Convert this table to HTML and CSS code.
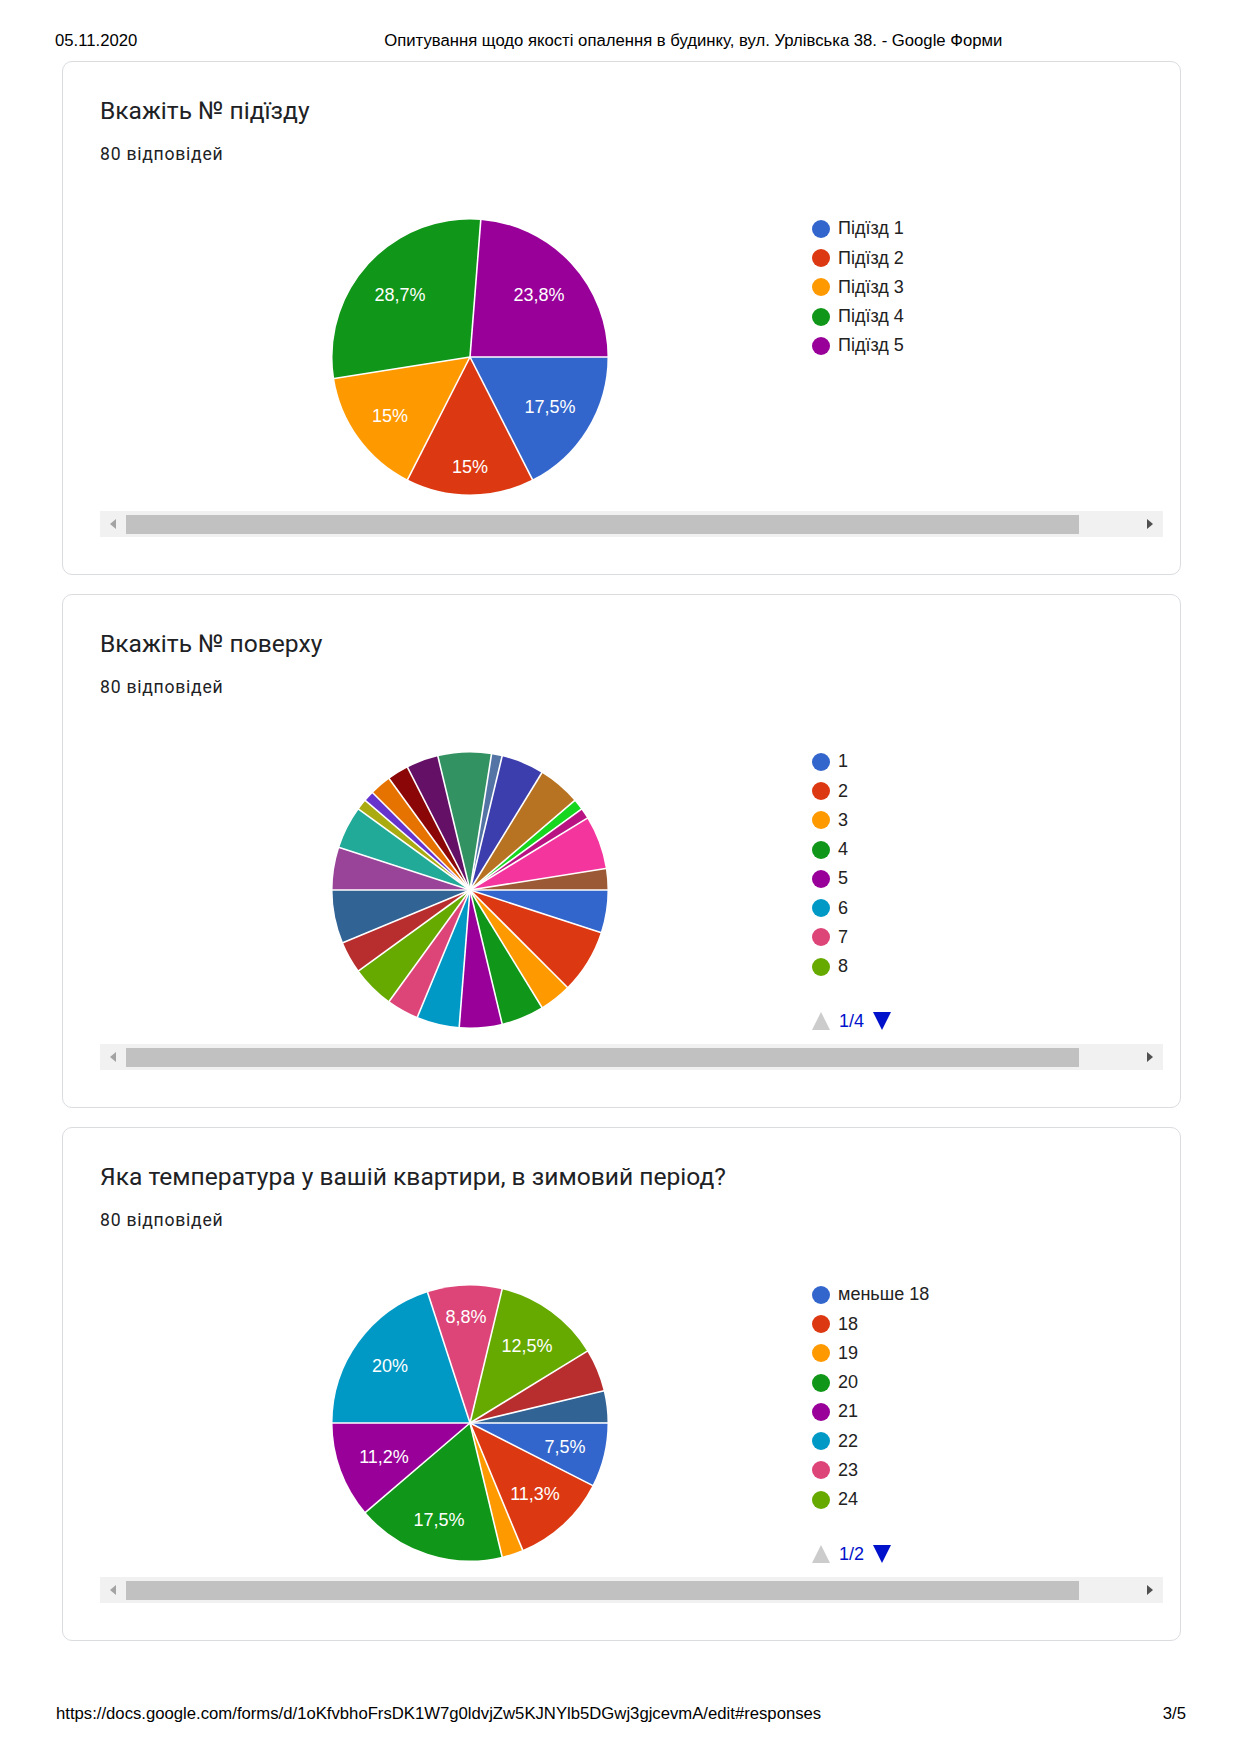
FILE: index.html
```html
<!DOCTYPE html>
<html lang="uk">
<head>
<meta charset="utf-8">
<title>Опитування щодо якості опалення в будинку, вул. Урлівська 38. - Google Форми</title>
<link rel="stylesheet" href="styles.css">
</head>
<body>
<div class="page">
  <header class="print-head">
    <span class="print-date">05.11.2020</span>
    <span class="print-title">Опитування щодо якості опалення в будинку, вул. Урлівська 38. - Google Форми</span>
  </header>

  <main class="cards">
    <!-- Card 1 -->
    <section class="card">
      <h2 class="q-title">Вкажіть № підїзду</h2>
      <p class="q-count">80 відповідей</p>
      <div class="chart">
        <svg class="pie" width="300" height="300" viewBox="-150 -150 300 300">
          <g class="slices">
            <circle r="68.75" pathLength="80" stroke="#3366cc" stroke-dasharray="14 80" transform="rotate(0)"/>
            <circle r="68.75" pathLength="80" stroke="#dc3912" stroke-dasharray="12 80" transform="rotate(63)"/>
            <circle r="68.75" pathLength="80" stroke="#ff9900" stroke-dasharray="12 80" transform="rotate(117)"/>
            <circle r="68.75" pathLength="80" stroke="#109618" stroke-dasharray="23 80" transform="rotate(171)"/>
            <circle r="68.75" pathLength="80" stroke="#990099" stroke-dasharray="19 80" transform="rotate(274.5)"/>
          </g>
          <g class="seps">
            <line x2="139" transform="rotate(0)"/>
            <line x2="139" transform="rotate(63)"/>
            <line x2="139" transform="rotate(117)"/>
            <line x2="139" transform="rotate(171)"/>
            <line x2="139" transform="rotate(274.5)"/>
          </g>
          <g class="labels">
            <text x="80" y="55.5">17,5%</text>
            <text x="0" y="115.5">15%</text>
            <text x="-80" y="64.5">15%</text>
            <text x="-70" y="-56.5">28,7%</text>
            <text x="69" y="-56.5">23,8%</text>
          </g>
        </svg>
        <div class="legend">
          <ul class="legend-list">
            <li><span class="dot c1"></span>Підїзд 1</li>
            <li><span class="dot c2"></span>Підїзд 2</li>
            <li><span class="dot c3"></span>Підїзд 3</li>
            <li><span class="dot c4"></span>Підїзд 4</li>
            <li><span class="dot c5"></span>Підїзд 5</li>
          </ul>
        </div>
      </div>
      <div class="hscroll">
        <span class="sb-btn sb-left"><span class="arr-left"></span></span>
        <span class="sb-thumb"></span>
        <span class="sb-space"></span>
        <span class="sb-btn sb-right"><span class="arr-right"></span></span>
      </div>
    </section>

    <!-- Card 2 -->
    <section class="card">
      <h2 class="q-title">Вкажіть № поверху</h2>
      <p class="q-count">80 відповідей</p>
      <div class="chart">
        <svg class="pie" width="300" height="300" viewBox="-150 -150 300 300">
          <g class="slices">
            <circle r="68.75" pathLength="80" stroke="#3366cc" stroke-dasharray="4 80" transform="rotate(0)"/>
            <circle r="68.75" pathLength="80" stroke="#dc3912" stroke-dasharray="6 80" transform="rotate(18)"/>
            <circle r="68.75" pathLength="80" stroke="#ff9900" stroke-dasharray="3 80" transform="rotate(45)"/>
            <circle r="68.75" pathLength="80" stroke="#109618" stroke-dasharray="4 80" transform="rotate(58.5)"/>
            <circle r="68.75" pathLength="80" stroke="#990099" stroke-dasharray="4 80" transform="rotate(76.5)"/>
            <circle r="68.75" pathLength="80" stroke="#0099c6" stroke-dasharray="4 80" transform="rotate(94.5)"/>
            <circle r="68.75" pathLength="80" stroke="#dd4477" stroke-dasharray="3 80" transform="rotate(112.5)"/>
            <circle r="68.75" pathLength="80" stroke="#66aa00" stroke-dasharray="4 80" transform="rotate(126)"/>
            <circle r="68.75" pathLength="80" stroke="#b82e2e" stroke-dasharray="3 80" transform="rotate(144)"/>
            <circle r="68.75" pathLength="80" stroke="#316395" stroke-dasharray="5 80" transform="rotate(157.5)"/>
            <circle r="68.75" pathLength="80" stroke="#994499" stroke-dasharray="4 80" transform="rotate(180)"/>
            <circle r="68.75" pathLength="80" stroke="#22aa99" stroke-dasharray="4 80" transform="rotate(198)"/>
            <circle r="68.75" pathLength="80" stroke="#aaaa11" stroke-dasharray="1 80" transform="rotate(216)"/>
            <circle r="68.75" pathLength="80" stroke="#6633cc" stroke-dasharray="1 80" transform="rotate(220.5)"/>
            <circle r="68.75" pathLength="80" stroke="#e67300" stroke-dasharray="2 80" transform="rotate(225)"/>
            <circle r="68.75" pathLength="80" stroke="#8b0707" stroke-dasharray="2 80" transform="rotate(234)"/>
            <circle r="68.75" pathLength="80" stroke="#651067" stroke-dasharray="3 80" transform="rotate(243)"/>
            <circle r="68.75" pathLength="80" stroke="#329262" stroke-dasharray="5 80" transform="rotate(256.5)"/>
            <circle r="68.75" pathLength="80" stroke="#5574a6" stroke-dasharray="1 80" transform="rotate(279)"/>
            <circle r="68.75" pathLength="80" stroke="#3b3eac" stroke-dasharray="4 80" transform="rotate(283.5)"/>
            <circle r="68.75" pathLength="80" stroke="#b77322" stroke-dasharray="4 80" transform="rotate(301.5)"/>
            <circle r="68.75" pathLength="80" stroke="#16d620" stroke-dasharray="1 80" transform="rotate(319.5)"/>
            <circle r="68.75" pathLength="80" stroke="#b91383" stroke-dasharray="1 80" transform="rotate(324)"/>
            <circle r="68.75" pathLength="80" stroke="#f4359e" stroke-dasharray="5 80" transform="rotate(328.5)"/>
            <circle r="68.75" pathLength="80" stroke="#9c5935" stroke-dasharray="2 80" transform="rotate(351)"/>
          </g>
          <g class="seps">
            <line x2="139" transform="rotate(0)"/>
            <line x2="139" transform="rotate(18)"/>
            <line x2="139" transform="rotate(45)"/>
            <line x2="139" transform="rotate(58.5)"/>
            <line x2="139" transform="rotate(76.5)"/>
            <line x2="139" transform="rotate(94.5)"/>
            <line x2="139" transform="rotate(112.5)"/>
            <line x2="139" transform="rotate(126)"/>
            <line x2="139" transform="rotate(144)"/>
            <line x2="139" transform="rotate(157.5)"/>
            <line x2="139" transform="rotate(180)"/>
            <line x2="139" transform="rotate(198)"/>
            <line x2="139" transform="rotate(216)"/>
            <line x2="139" transform="rotate(220.5)"/>
            <line x2="139" transform="rotate(225)"/>
            <line x2="139" transform="rotate(234)"/>
            <line x2="139" transform="rotate(243)"/>
            <line x2="139" transform="rotate(256.5)"/>
            <line x2="139" transform="rotate(279)"/>
            <line x2="139" transform="rotate(283.5)"/>
            <line x2="139" transform="rotate(301.5)"/>
            <line x2="139" transform="rotate(319.5)"/>
            <line x2="139" transform="rotate(324)"/>
            <line x2="139" transform="rotate(328.5)"/>
            <line x2="139" transform="rotate(351)"/>
          </g>
        </svg>
        <div class="legend">
          <ul class="legend-list">
            <li><span class="dot c1"></span>1</li>
            <li><span class="dot c2"></span>2</li>
            <li><span class="dot c3"></span>3</li>
            <li><span class="dot c4"></span>4</li>
            <li><span class="dot c5"></span>5</li>
            <li><span class="dot c6"></span>6</li>
            <li><span class="dot c7"></span>7</li>
            <li><span class="dot c8"></span>8</li>
          </ul>
          <div class="pager">
            <span class="pg-up"></span>
            <span class="pg-text">1/4</span>
            <span class="pg-down"></span>
          </div>
        </div>
      </div>
      <div class="hscroll">
        <span class="sb-btn sb-left"><span class="arr-left"></span></span>
        <span class="sb-thumb"></span>
        <span class="sb-space"></span>
        <span class="sb-btn sb-right"><span class="arr-right"></span></span>
      </div>
    </section>

    <!-- Card 3 -->
    <section class="card">
      <h2 class="q-title">Яка температура у вашій квартири, в зимовий період?</h2>
      <p class="q-count">80 відповідей</p>
      <div class="chart">
        <svg class="pie" width="300" height="300" viewBox="-150 -150 300 300">
          <g class="slices">
            <circle r="68.75" pathLength="80" stroke="#3366cc" stroke-dasharray="6 80" transform="rotate(0)"/>
            <circle r="68.75" pathLength="80" stroke="#dc3912" stroke-dasharray="9 80" transform="rotate(27)"/>
            <circle r="68.75" pathLength="80" stroke="#ff9900" stroke-dasharray="2 80" transform="rotate(67.5)"/>
            <circle r="68.75" pathLength="80" stroke="#109618" stroke-dasharray="14 80" transform="rotate(76.5)"/>
            <circle r="68.75" pathLength="80" stroke="#990099" stroke-dasharray="9 80" transform="rotate(139.5)"/>
            <circle r="68.75" pathLength="80" stroke="#0099c6" stroke-dasharray="16 80" transform="rotate(180)"/>
            <circle r="68.75" pathLength="80" stroke="#dd4477" stroke-dasharray="7 80" transform="rotate(252)"/>
            <circle r="68.75" pathLength="80" stroke="#66aa00" stroke-dasharray="10 80" transform="rotate(283.5)"/>
            <circle r="68.75" pathLength="80" stroke="#b82e2e" stroke-dasharray="4 80" transform="rotate(328.5)"/>
            <circle r="68.75" pathLength="80" stroke="#316395" stroke-dasharray="3 80" transform="rotate(346.5)"/>
          </g>
          <g class="seps">
            <line x2="139" transform="rotate(0)"/>
            <line x2="139" transform="rotate(27)"/>
            <line x2="139" transform="rotate(67.5)"/>
            <line x2="139" transform="rotate(76.5)"/>
            <line x2="139" transform="rotate(139.5)"/>
            <line x2="139" transform="rotate(180)"/>
            <line x2="139" transform="rotate(252)"/>
            <line x2="139" transform="rotate(283.5)"/>
            <line x2="139" transform="rotate(328.5)"/>
            <line x2="139" transform="rotate(346.5)"/>
          </g>
          <g class="labels">
            <text x="95" y="29.5">7,5%</text>
            <text x="65" y="76.5">11,3%</text>
            <text x="-31" y="102.5">17,5%</text>
            <text x="-86" y="39.5">11,2%</text>
            <text x="-80" y="-51.5">20%</text>
            <text x="-4" y="-100.5">8,8%</text>
            <text x="57" y="-71.5">12,5%</text>
          </g>
        </svg>
        <div class="legend">
          <ul class="legend-list">
            <li><span class="dot c1"></span>меньше 18</li>
            <li><span class="dot c2"></span>18</li>
            <li><span class="dot c3"></span>19</li>
            <li><span class="dot c4"></span>20</li>
            <li><span class="dot c5"></span>21</li>
            <li><span class="dot c6"></span>22</li>
            <li><span class="dot c7"></span>23</li>
            <li><span class="dot c8"></span>24</li>
          </ul>
          <div class="pager">
            <span class="pg-up"></span>
            <span class="pg-text">1/2</span>
            <span class="pg-down"></span>
          </div>
        </div>
      </div>
      <div class="hscroll">
        <span class="sb-btn sb-left"><span class="arr-left"></span></span>
        <span class="sb-thumb"></span>
        <span class="sb-space"></span>
        <span class="sb-btn sb-right"><span class="arr-right"></span></span>
      </div>
    </section>
  </main>

  <footer class="print-foot">
    <span class="print-url">https://docs.google.com/forms/d/1oKfvbhoFrsDK1W7g0ldvjZw5KJNYlb5DGwj3gjcevmA/edit#responses</span>
    <span class="print-page">3/5</span>
  </footer>
</div>
</body>
</html>
```

FILE: styles.css
```css
html, body {
  margin: 0;
  padding: 0;
  background: #ffffff;
}

.page {
  width: 1240px;
  height: 1754px;
  overflow: hidden;
  font-family: "Liberation Sans", Arial, sans-serif;
  color: #000;
}

/* print header */
.print-head {
  display: flex;
  padding: 31px 0 0 55px;
  font-size: 16.7px;
  line-height: 19px;
  height: 19px;
  white-space: nowrap;
}
.print-title {
  margin-left: 247px;
}

/* cards */
.cards {
  display: flex;
  flex-direction: column;
  gap: 19px;
  margin: 11px 0 0 62px;
  width: 1119px;
}

.card {
  box-sizing: border-box;
  height: 514px;
  border: 1px solid #dadce0;
  border-radius: 10px;
  padding: 33px 17px 0 37px;
  background: #fff;
}

.q-title {
  margin: 0;
  font-family: Roboto, "Noto Sans", sans-serif;
  font-weight: 400;
  font-size: 24.6px;
  line-height: 32px;
  color: #202124;
}

.q-count {
  margin: 15px 0 0 0;
  font-family: Roboto, "Noto Sans", sans-serif;
  font-size: 17.6px;
  line-height: 24px;
  letter-spacing: 0.75px;
  color: #202124;
}

.chart {
  display: flex;
  align-items: flex-start;
  height: 345px;
}

.pie {
  display: block;
  flex: none;
  margin: 41px 0 0 220px;
  overflow: visible;
}
.pie circle {
  fill: none;
  stroke-width: 137.5;
}
.pie line {
  stroke: #ffffff;
  stroke-width: 1.6;
}
.pie text {
  font-family: "Liberation Sans", Arial, sans-serif;
  font-size: 18px;
  fill: #ffffff;
  text-anchor: middle;
}

.legend {
  margin: 48.2px 0 0 192px;
}
.legend-list {
  list-style: none;
  margin: 0;
  padding: 0;
}
.legend-list li {
  display: flex;
  align-items: center;
  height: 29.25px;
  font-size: 18px;
  color: #222222;
  white-space: nowrap;
}
.dot {
  width: 18px;
  height: 18px;
  border-radius: 50%;
  margin-right: 8px;
  flex: none;
}
.c1 { background: #3366cc; }
.c2 { background: #dc3912; }
.c3 { background: #ff9900; }
.c4 { background: #109618; }
.c5 { background: #990099; }
.c6 { background: #0099c6; }
.c7 { background: #dd4477; }
.c8 { background: #66aa00; }

.pager {
  display: flex;
  align-items: center;
  height: 18px;
  margin-top: 30.4px;
}
.pg-up {
  width: 0;
  height: 0;
  border-left: 9px solid transparent;
  border-right: 9px solid transparent;
  border-bottom: 18px solid #cccccc;
}
.pg-down {
  width: 0;
  height: 0;
  border-left: 9px solid transparent;
  border-right: 9px solid transparent;
  border-top: 18px solid #0011cc;
}
.pg-text {
  margin: 0 9px;
  font-size: 18px;
  line-height: 18px;
  color: #0011cc;
}

/* horizontal scrollbar */
.hscroll {
  display: flex;
  align-items: center;
  height: 26px;
  background: #f1f1f1;
}
.sb-btn {
  width: 26px;
  height: 26px;
  flex: none;
  display: flex;
  align-items: center;
  justify-content: center;
}
.sb-thumb {
  width: 953px;
  height: 19px;
  flex: none;
  background: #c1c1c1;
}
.sb-space {
  flex: 1;
}
.arr-left {
  width: 0;
  height: 0;
  border-top: 5px solid transparent;
  border-bottom: 5px solid transparent;
  border-right: 6px solid #a3a3a3;
}
.arr-right {
  width: 0;
  height: 0;
  border-top: 5px solid transparent;
  border-bottom: 5px solid transparent;
  border-left: 6px solid #505050;
}

/* print footer */
.print-foot {
  display: flex;
  justify-content: space-between;
  margin-top: 63px;
  padding: 0 54px 0 56px;
  font-size: 16.7px;
  line-height: 19px;
  white-space: nowrap;
}
```
